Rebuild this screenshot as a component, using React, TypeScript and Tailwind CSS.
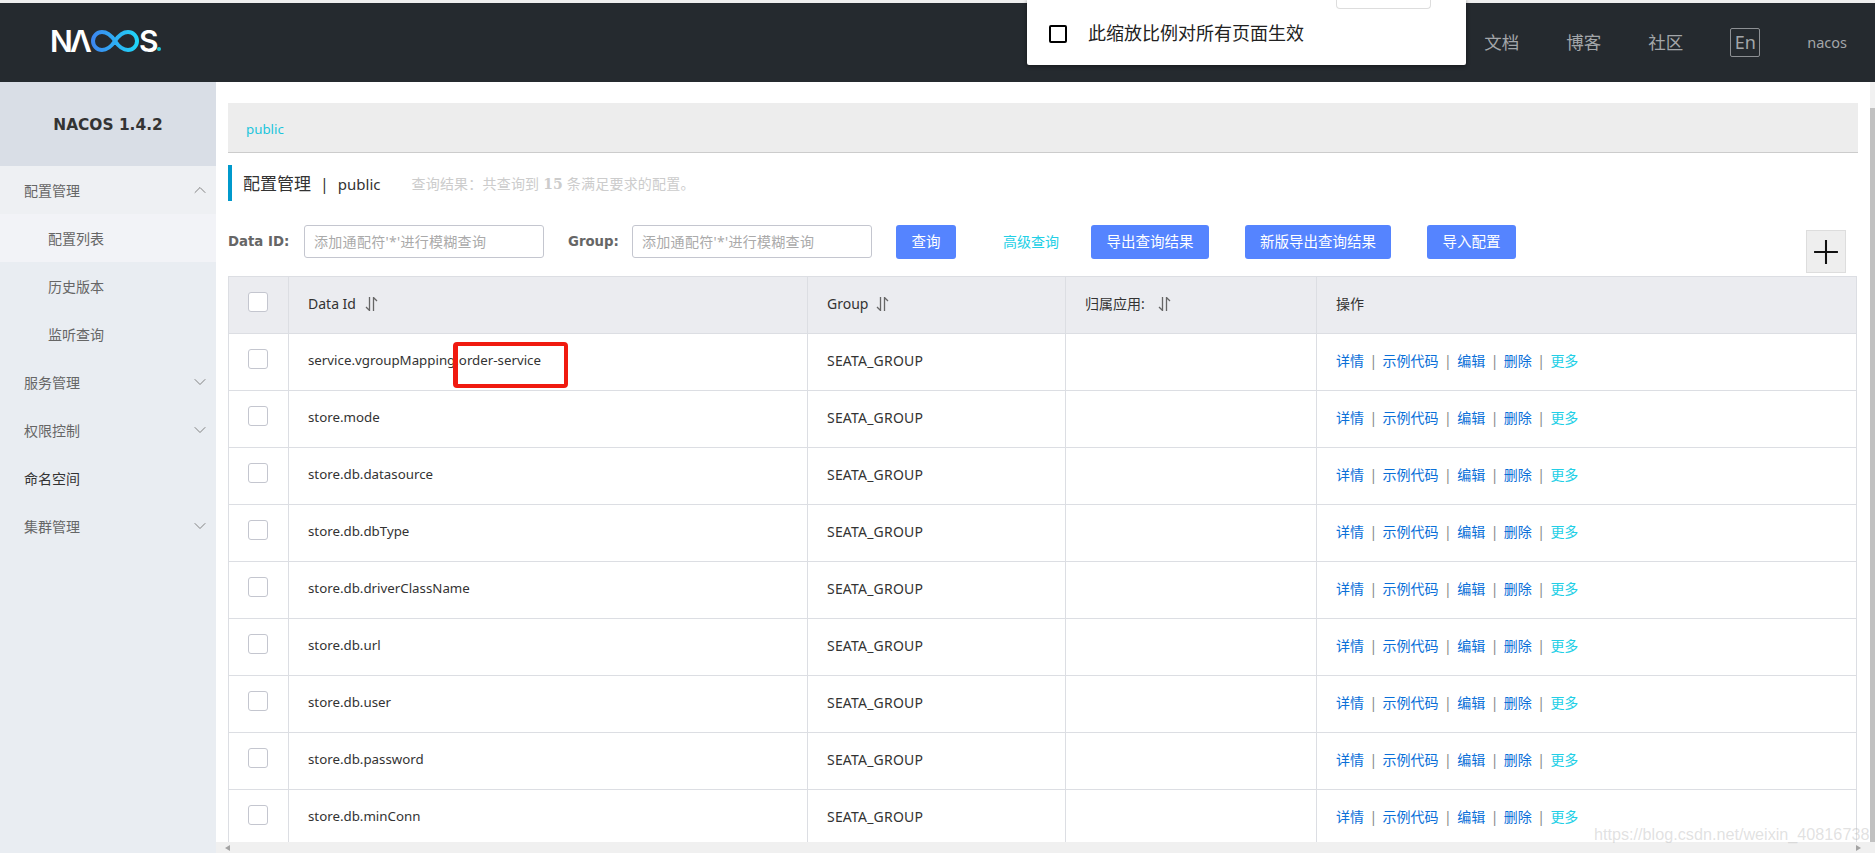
import { ChevronDown, ChevronUp } from "lucide-react";

const ROWS = [
  "service.vgroupMapping.order-service",
  "store.mode",
  "store.db.datasource",
  "store.db.dbType",
  "store.db.driverClassName",
  "store.db.url",
  "store.db.user",
  "store.db.password",
  "store.db.minConn",
];

const ACTIONS = ["详情", "示例代码", "编辑", "删除"];

const Logo = () => (
  <div className="flex items-center mb-[3px] text-white h-[22px] font-['Inter',sans-serif] text-[30px] leading-none font-semibold">
    <span className="w-[20px]">N</span>
    <span className="w-[21px]">Λ</span>
    <svg width="48" height="22" viewBox="0 0 48 22" fill="none">
      <defs>
        <linearGradient id="nacos-inf" x1="0" y1="0" x2="48" y2="0" gradientUnits="userSpaceOnUse">
          <stop offset="0" stopColor="#3d84f0" />
          <stop offset="1" stopColor="#1fd8f8" />
        </linearGradient>
      </defs>
      <path
        d="M24 11C20 5 16 2 11 2A9 9 0 0 0 11 20C16 20 20 17 24 11C28 5 32 2 37 2A9 9 0 0 1 37 20C32 20 28 17 24 11Z"
        stroke="url(#nacos-inf)"
        strokeWidth="4"
      />
    </svg>
    <span className="w-[18px]">S</span>
    <span className="w-[4px] h-[4px] rounded-full bg-[#1fc8d8] self-end mb-[1px]"></span>
  </div>
);

const SortIcon = () => (
  <svg width="13" height="14" viewBox="0 0 13 14" fill="none" stroke="#666" strokeWidth="1.3">
    <path d="M4.5 0V13.5L1 10" />
    <path d="M8.5 14V.5L12 4" />
  </svg>
);

const Checkbox = () => (
  <div className="w-5 h-5 ml-[19px] mb-[7px] bg-white border border-[#c4c6cf] rounded-[3px]"></div>
);

const NavItem = ({ label, open, active }: { label: string; open?: boolean; active?: boolean }) => (
  <div
    className={`flex items-center justify-between h-12 pl-6 pr-[6px] ${open ? "bg-[#eef0f3]" : ""} ${active ? "text-[#333]" : "text-[#666]"}`}
  >
    <span>{label}</span>
    {open !== undefined &&
      (open ? (
        <ChevronUp size={20} strokeWidth={1.1} color="#777" />
      ) : (
        <ChevronDown size={20} strokeWidth={1.1} color="#777" />
      ))}
  </div>
);

const Header = () => (
  <header className="relative flex items-center justify-between h-[79px] shrink-0 bg-[#252a2f] pl-[50px] pr-[28px]">
    <Logo />
    <nav className="flex items-center gap-[47px] text-[#a3a6a9] text-[17.5px]">
      <span>文档</span>
      <span>博客</span>
      <span>社区</span>
      <span className="flex items-center justify-center w-[30px] h-[29px] border border-[#8d9094] rounded-[2px] text-[18px]">
        En
      </span>
      <span className="text-[14.5px]">nacos</span>
    </nav>
  </header>
);

const Sidebar = () => (
  <aside className="w-[216px] shrink-0 bg-[#e9edf2] text-[14px]">
    <div className="flex items-center justify-center h-[84px] pt-[3px] bg-[#d9dee6] text-[#333] text-[15.4px] font-bold font-['DejaVu_Sans',sans-serif]">
      NACOS 1.4.2
    </div>
    <NavItem label="配置管理" open />
    <div className="flex items-center h-12 pl-12 bg-[#f2f3f7] text-[#666]">配置列表</div>
    <div className="flex items-center h-12 pl-12 text-[#666]">历史版本</div>
    <div className="flex items-center h-12 pl-12 text-[#666]">监听查询</div>
    <NavItem label="服务管理" open={false} />
    <NavItem label="权限控制" open={false} />
    <NavItem label="命名空间" active />
    <NavItem label="集群管理" open={false} />
  </aside>
);

const SearchBar = () => (
  <div className="flex items-start h-[51px] mt-6 text-[14px]">
    <span className="w-[76px] h-[33px] leading-[33px] text-[#666] font-bold font-['DejaVu_Sans',sans-serif] text-[13.3px]">
      Data ID:
    </span>
    <div className="w-[240px] h-[33px] leading-[31px] pl-[9px] border border-[#c4c6cf] rounded-[3px] tracking-[0.3px] text-[#aaa]">
      添加通配符'*'进行模糊查询
    </div>
    <span className="w-[64px] ml-6 h-[33px] leading-[33px] text-[#666] font-bold font-['DejaVu_Sans',sans-serif] text-[13.3px]">
      Group:
    </span>
    <div className="w-[240px] h-[33px] leading-[31px] pl-[9px] border border-[#c4c6cf] rounded-[3px] tracking-[0.3px] text-[#aaa]">
      添加通配符'*'进行模糊查询
    </div>
    <button className="w-[60px] h-[34px] ml-6 bg-[#5584ff] rounded-[3px] text-[14.5px] text-white">查询</button>
    <span className="w-[58px] ml-[47px] h-[34px] leading-[34px] text-[#22cfe6]">高级查询</span>
    <button className="w-[118px] h-[34px] ml-[30px] bg-[#5584ff] rounded-[3px] text-[14.5px] text-white">导出查询结果</button>
    <button className="w-[146px] h-[34px] ml-9 bg-[#5584ff] rounded-[3px] text-[14.5px] text-white">新版导出查询结果</button>
    <button className="w-[89px] h-[34px] ml-9 bg-[#5584ff] rounded-[3px] text-[14.5px] text-white">导入配置</button>
    <div className="flex items-center justify-center w-10 h-[43px] ml-auto mr-6 mt-[5px] bg-[#eeeeee] border border-[#dddddd]">
      <svg width="26" height="26" viewBox="0 0 24 24" stroke="#111" strokeWidth="1.9">
        <path d="M12 1V23M1 12H23" />
      </svg>
    </div>
  </div>
);

const TableHead = ({ label, gap }: { label: string; gap: string }) => (
  <th className="pl-[19px] pb-[3px] text-left font-normal border border-[#dcdee3]">
    <span className={`inline-flex items-center ${gap}`}>
      {label}
      <SortIcon />
    </span>
  </th>
);

const ConfigTable = () => (
  <table className="w-[1629px] table-fixed border-collapse text-[14px] text-[#333]">
    <colgroup>
      <col className="w-[60px]" />
      <col className="w-[519px]" />
      <col className="w-[258px]" />
      <col className="w-[251px]" />
      <col />
    </colgroup>
    <thead className="bg-[#ebecf0]">
      <tr className="h-[57px]">
        <th className="border border-[#dcdee3]">
          <Checkbox />
        </th>
        <TableHead label="Data Id" gap="gap-[9px]" />
        <TableHead label="Group" gap="gap-2" />
        <TableHead label="归属应用:" gap="gap-[13px]" />
        <th className="pl-[19px] pb-[3px] text-left font-normal border border-[#dcdee3]">操作</th>
      </tr>
    </thead>
    <tbody>
      {ROWS.map((dataId) => (
        <tr key={dataId} className="h-[57px]">
          <td className="border border-[#dcdee3]">
            <Checkbox />
          </td>
          <td className="pl-[19px] pb-[2px] text-[13.3px] border border-[#dcdee3]">{dataId}</td>
          <td className="pl-[19px] pb-[3px] tracking-[0.2px] border border-[#dcdee3]">SEATA_GROUP</td>
          <td className="border border-[#dcdee3]"></td>
          <td className="pl-[19px] pb-[3px] border border-[#dcdee3]">
            <div className="flex items-center">
              {ACTIONS.map((action) => (
                <span key={action} className="flex items-center text-[#0a6fd8]">
                  {action}
                  <span className="w-[18.6px] text-center text-[#888]">|</span>
                </span>
              ))}
              <span className="text-[#22cfe6]">更多</span>
            </div>
          </td>
        </tr>
      ))}
    </tbody>
  </table>
);

const App = () => {
  return (
    <div className="relative flex flex-col w-[1875px] h-[853px] overflow-hidden bg-white font-['Noto_Sans','Noto_Sans_CJK_SC',sans-serif]">
      <div className="h-[3px] shrink-0 bg-[#eeeeee]"></div>
      <Header />
      <div className="flex flex-1 min-h-0">
        <Sidebar />
        <div className="flex flex-col flex-1 min-w-0">
          <div className="flex flex-1 min-h-0">
            <main className="flex-1 min-w-0 overflow-hidden pl-3 pt-[21px]">
              <div className="flex items-center h-[50px] w-[1630px] pl-[18px] pt-[5px] bg-[#ededed] border-b border-[#cccccc] text-[13.3px] text-[#1bc5dc]">
                public
              </div>
              <div className="flex items-center h-9 mt-3 pl-[11px] pt-[2px] border-l-4 border-[#0099cc] text-[#333]">
                <span className="text-[17px]">配置管理</span>
                <span className="mx-[9px] text-[16px]">|</span>
                <span className="text-[15px]">public</span>
                <span className="ml-[31px] text-[14px] tracking-[0.2px] text-[#cccccc]">
                  查询结果：共查询到 <b className="font-['DejaVu_Serif',serif]">15</b> 条满足要求的配置。
                </span>
              </div>
              <SearchBar />
              <ConfigTable />
            </main>
            <div className="flex flex-col w-[5px] shrink-0 pt-[26px] bg-[#f1f1f1]">
              <div className="flex-1 bg-[#c1c1c1]"></div>
            </div>
          </div>
          <div className="flex items-center justify-between h-[11px] shrink-0 pl-[9px] pr-[14px] bg-[#f0f0f0]">
            <svg width="5" height="6" viewBox="0 0 5 6" fill="#a3a3a3">
              <path d="M0 3L5 0V6Z" />
            </svg>
            <svg width="5" height="6" viewBox="0 0 5 6" fill="#a3a3a3">
              <path d="M5 3L0 0V6Z" />
            </svg>
          </div>
        </div>
      </div>

      {/* browser zoom popup cut off by the top of the window */}
      <div className="absolute left-[1027px] top-0 flex items-center w-[439px] h-[65px] pl-[22px] pt-[2px] bg-white rounded-b-[2px] shadow-[0_1px_4px_rgba(0,0,0,0.45)]">
        <div className="w-[18px] h-[18px] border-2 border-black rounded-[2px]"></div>
        <span className="ml-[21px] text-[18px] text-[#222]">此缩放比例对所有页面生效</span>
        <div className="absolute left-[309px] top-0 w-[95px] h-[9px] border border-t-0 border-[#dddddd] rounded-b-[4px]"></div>
      </div>

      {/* red annotation drawn over the screenshot */}
      <div className="absolute left-[453px] top-[342px] w-[115px] h-[46px] border-4 border-l-[5px] border-[#f01a10] rounded-[4px]"></div>

      <div className="absolute left-[1594px] top-[822px] text-[16.2px] text-[#b4b4b4]/40 font-['Liberation_Sans',sans-serif]">
        https://blog.csdn.net/weixin_40816738
      </div>
    </div>
  );
};

export default App;
